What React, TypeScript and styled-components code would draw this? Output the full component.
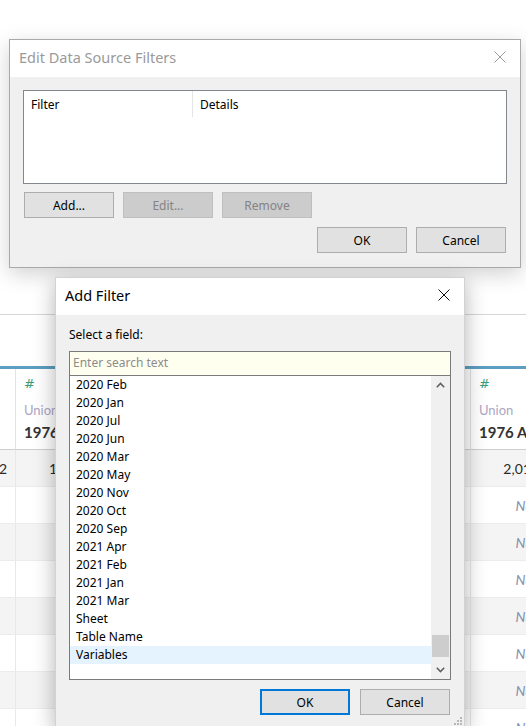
import React from 'react';
import styled, { createGlobalStyle } from 'styled-components';

const GlobalStyle = createGlobalStyle`
  html, body {
    margin: 0;
    padding: 0;
    background: #ffffff;
    overflow: hidden;
  }
`;

const UI_FONT = `"Noto Sans", "Open Sans", sans-serif`;
const SHEET_FONT = `Lato, "Noto Sans", sans-serif`;

const FIELDS = [
  '2020 Feb',
  '2020 Jan',
  '2020 Jul',
  '2020 Jun',
  '2020 Mar',
  '2020 May',
  '2020 Nov',
  '2020 Oct',
  '2020 Sep',
  '2021 Apr',
  '2021 Feb',
  '2021 Jan',
  '2021 Mar',
  'Sheet',
  'Table Name',
  'Variables',
];

// columns 2 and 3 sit fully behind the Add Filter window
const VISIBLE_HEADERS = [false, true, false, false, true];

const ROWS: (string | null)[][] = [
  ['2', '1', '', '', '2,019'],
  ['', '', '', '', null],
  ['', '', '', '', null],
  ['', '', '', '', null],
  ['', '', '', '', null],
  ['', '', '', '', null],
  ['', '', '', '', null],
  ['', '', '', '', null],
];

export default function App() {
  return (
    <>
      <GlobalStyle />
      <Desktop>
        <DataSheet />

        <Window $left={9} $top={39} $width={512} $height={229}>
          <TitleBar>
            <Title $inactive>Edit Data Source Filters</Title>
            <CloseIcon color="#9a9a9a" />
          </TitleBar>
          <FiltersBody>
            <ListView>
              <ListHeader>
                <ListHeaderCell $width={169}>Filter</ListHeaderCell>
                <ListHeaderCell>Details</ListHeaderCell>
              </ListHeader>
            </ListView>
            <ButtonRow>
              <Button>Add...</Button>
              <Button disabled>Edit...</Button>
              <Button disabled>Remove</Button>
            </ButtonRow>
            <ButtonRow $end>
              <Button>OK</Button>
              <Button>Cancel</Button>
            </ButtonRow>
          </FiltersBody>
        </Window>

        <Window $left={55} $top={277} $width={410} $height={452} $active>
          <TitleBar>
            <Title>Add Filter</Title>
            <CloseIcon color="#111111" />
          </TitleBar>
          <AddBody>
            <FieldLabel>Select a field:</FieldLabel>
            <SearchBox placeholder="Enter search text" readOnly />
            <FieldList>
              <FieldItems>
                {FIELDS.map((name) => (
                  <FieldItem key={name} $hover={name === 'Variables'}>
                    {name}
                  </FieldItem>
                ))}
              </FieldItems>
              <ScrollBar>
                <ScrollArrow>
                  <Chevron up />
                </ScrollArrow>
                <ScrollTrack>
                  <ScrollThumb />
                </ScrollTrack>
                <ScrollArrow>
                  <Chevron />
                </ScrollArrow>
              </ScrollBar>
            </FieldList>
            <ButtonRow $end $gap={10}>
              <Button $default>OK</Button>
              <Button>Cancel</Button>
            </ButtonRow>
            <Grip />
          </AddBody>
        </Window>
      </Desktop>
    </>
  );
}

function DataSheet() {
  return (
    <Sheet>
      <SheetTop />
      <Grid>
        {VISIBLE_HEADERS.map((visible, col) => (
          <HeaderCell key={col} $first={col === 0}>
            {visible && (
              <>
                <TypeGlyph>#</TypeGlyph>
                <SourceName>Union</SourceName>
                <FieldName>1976 Apr</FieldName>
              </>
            )}
          </HeaderCell>
        ))}
        {ROWS.map((row, r) =>
          row.map((value, col) => (
            <Cell key={`${r}-${col}`} $first={col === 0} $shade={r % 2 === 0}>
              {value === null ? <NullValue>Null</NullValue> : value}
            </Cell>
          ))
        )}
      </Grid>
    </Sheet>
  );
}

function CloseIcon({ color }: { color: string }) {
  return (
    <svg width="12" height="12" viewBox="0 0 12 12">
      <path d="M0.5 0.5 L11.5 11.5 M11.5 0.5 L0.5 11.5" stroke={color} strokeWidth="1" fill="none" />
    </svg>
  );
}

function Chevron({ up }: { up?: boolean }) {
  return (
    <svg width="9" height="6" viewBox="0 0 9 6">
      <path
        d={up ? 'M0.8 5.2 L4.5 1.5 L8.2 5.2' : 'M0.8 0.8 L4.5 4.5 L8.2 0.8'}
        stroke="#606060"
        strokeWidth="1.6"
        fill="none"
      />
    </svg>
  );
}

function Grip() {
  const dots = [
    [6, 0],
    [3, 3],
    [6, 3],
    [0, 6],
    [3, 6],
    [6, 6],
  ];
  return (
    <GripBox width="8" height="8" viewBox="0 0 8 8">
      {dots.map(([x, y]) => (
        <rect key={`${x}-${y}`} x={x} y={y} width="2" height="2" fill="#b8b8b8" />
      ))}
    </GripBox>
  );
}

const Desktop = styled.div`
  position: relative;
  width: 526px;
  height: 726px;
  overflow: hidden;
  background: #ffffff;
`;

/* background sheet */

const Sheet = styled.div`
  display: flex;
  flex-direction: column;
  font-family: ${SHEET_FONT};
  color: #333333;
`;

const SheetTop = styled.div`
  height: 314px;
  border-bottom: 1px solid #d6d6d6;
  margin-bottom: 51px;
`;

const Grid = styled.div`
  display: grid;
  grid-template-columns: 15px 50px 203px 202px 77px;
  width: 547px;
  border-top: 3px solid #5d9dc1;
`;

const HeaderCell = styled.div<{ $first?: boolean }>`
  height: 81px;
  display: flex;
  flex-direction: column;
  padding: 7px 0 0 8px;
  box-sizing: border-box;
  border-left: ${(p) => (p.$first ? 'none' : '1px solid #e3e3e3')};
  border-bottom: 1px solid #cfcfcf;
  overflow: visible;
  white-space: nowrap;
  min-width: 0;
`;

const TypeGlyph = styled.span`
  font-family: "DejaVu Sans", sans-serif;
  font-size: 13px;
  line-height: 16px;
  color: #3c9c78;
`;

const SourceName = styled.span`
  margin-top: 10px;
  font-size: 13px;
  line-height: 16px;
  color: #aca6c4;
`;

const FieldName = styled.span`
  margin-top: 5px;
  font-size: 15px;
  line-height: 18px;
  font-weight: 700;
  color: #333333;
`;

const Cell = styled.div<{ $first?: boolean; $shade?: boolean }>`
  height: 37px;
  display: flex;
  align-items: center;
  justify-content: flex-end;
  padding-right: 8px;
  box-sizing: border-box;
  font-size: 14px;
  color: #2b2b2b;
  background: ${(p) => (p.$shade ? '#f4f4f4' : '#ffffff')};
  border-left: ${(p) => (p.$first ? 'none' : '1px solid #e8e8e8')};
  border-bottom: 1px solid #ececec;
  white-space: nowrap;
  overflow: hidden;
`;

const NullValue = styled.span`
  font-style: italic;
  color: #8590ad;
`;

/* windows */

const Window = styled.div<{
  $left: number;
  $top: number;
  $width: number;
  $height: number;
  $active?: boolean;
}>`
  position: absolute;
  left: ${(p) => p.$left}px;
  top: ${(p) => p.$top}px;
  width: ${(p) => p.$width}px;
  height: ${(p) => p.$height}px;
  box-sizing: border-box;
  display: flex;
  flex-direction: column;
  background: #f0f0f0;
  border: 1px solid ${(p) => (p.$active ? 'rgba(0, 0, 0, 0.12)' : '#a9a9a9')};
  box-shadow: 0 6px 20px rgba(0, 0, 0, ${(p) => (p.$active ? 0.3 : 0.18)});
  font-family: ${UI_FONT};
  font-size: 12px;
  color: #000000;
`;

const TitleBar = styled.div`
  height: 37px;
  flex: none;
  box-sizing: border-box;
  display: flex;
  align-items: center;
  justify-content: space-between;
  padding: 0 14px 3px 9px;
  background: #ffffff;
`;

const Title = styled.span<{ $inactive?: boolean }>`
  font-size: 14.5px;
  color: ${(p) => (p.$inactive ? '#9a9a9a' : '#000000')};
`;

const FiltersBody = styled.div`
  flex: 1;
  display: flex;
  flex-direction: column;
  padding: 13px 13px 14px 13px;
`;

const ListView = styled.div`
  height: 94px;
  box-sizing: border-box;
  border: 1px solid #828790;
  background: #ffffff;
`;

const ListHeader = styled.div`
  display: flex;
  height: 26px;
`;

const ListHeaderCell = styled.div<{ $width?: number }>`
  ${(p) => (p.$width ? `width: ${p.$width}px; border-right: 1px solid #e5e5e5;` : 'flex: 1;')}
  box-sizing: border-box;
  display: flex;
  align-items: center;
  padding-left: 7px;
`;

const ButtonRow = styled.div<{ $end?: boolean; $gap?: number }>`
  display: flex;
  justify-content: ${(p) => (p.$end ? 'flex-end' : 'flex-start')};
  gap: ${(p) => p.$gap ?? 9}px;
  margin-top: ${(p) => (p.$end ? 9 : 8)}px;
  padding: 0 1px;
`;

const Button = styled.button<{ $default?: boolean }>`
  width: 90px;
  height: 26px;
  box-sizing: border-box;
  padding: 0;
  font-family: ${UI_FONT};
  font-size: 12px;
  color: #000000;
  background: #e1e1e1;
  border: ${(p) => (p.$default ? '2px solid #0078d7' : '1px solid #adadad')};
  border-radius: 0;

  &:disabled {
    background: #cccccc;
    border-color: #bfbfbf;
    color: #838383;
  }
`;

const AddBody = styled.div`
  position: relative;
  flex: 1;
  display: flex;
  flex-direction: column;
  padding: 11px 13px 0 13px;
`;

const FieldLabel = styled.div`
  line-height: 17px;
  margin-bottom: 8px;
`;

const SearchBox = styled.input`
  height: 25px;
  box-sizing: border-box;
  margin: 0;
  padding: 0 3px 2px;
  border: 1px solid #7a7a7a;
  background: #fffff0;
  font-family: ${UI_FONT};
  font-size: 12px;
  outline: none;

  &::placeholder {
    color: #8c8c8c;
  }
`;

const FieldList = styled.div`
  height: 304px;
  box-sizing: border-box;
  display: flex;
  border: 1px solid #7a7a7a;
  border-top: none;
  background: #ffffff;
`;

const FieldItems = styled.div`
  flex: 1;
  display: flex;
  flex-direction: column;
`;

const FieldItem = styled.div<{ $hover?: boolean }>`
  height: 18px;
  line-height: 18px;
  padding-left: 6px;
  background: ${(p) => (p.$hover ? '#e5f3ff' : 'transparent')};
`;

const ScrollBar = styled.div`
  width: 19px;
  display: flex;
  flex-direction: column;
  background: #f0f0f0;
`;

const ScrollArrow = styled.div`
  height: 18px;
  display: flex;
  align-items: center;
  justify-content: center;
`;

const ScrollTrack = styled.div`
  flex: 1;
  display: flex;
  flex-direction: column;
  justify-content: flex-end;
  padding: 0 1px 4px;
`;

const ScrollThumb = styled.div`
  height: 22px;
  background: #cdcdcd;
`;

const GripBox = styled.svg`
  position: absolute;
  right: 2px;
  bottom: 3px;
`;
